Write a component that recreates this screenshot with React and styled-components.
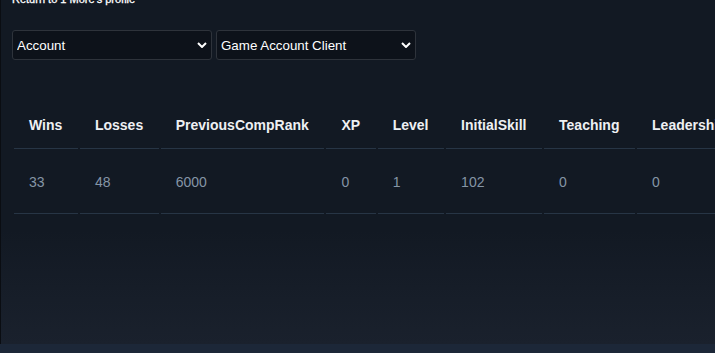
import React from 'react';
import styled, { createGlobalStyle } from 'styled-components';

const GlobalStyle = createGlobalStyle`
    html, body {
        margin: 0;
        padding: 0;
        background: #1c2738;
        overflow: hidden;
    }
    #root {
        width: 715px;
        height: 353px;
    }
`;

const Panel = styled.div`
    height: 344px;
    box-sizing: border-box;
    border-left: 1px solid #0a0d12;
    background: linear-gradient(to bottom, #121923 0px, #121923 230px, #1a212d 344px);
    font-family: "Liberation Sans", Arial, sans-serif;
    overflow: hidden;
    padding-left: 11px;
`;

const BackLink = styled.a`
    display: block;
    margin-top: -8px;
    height: 14px;
    color: #ffffff;
    font-size: 11px;
    line-height: 14px;
    text-decoration: none;
    -webkit-text-stroke: 0.3px #ffffff;
`;

const Filters = styled.div`
    display: flex;
    gap: 4px;
    margin-top: 24px;
`;

const SelectWrap = styled.div`
    position: relative;
    width: 200px;
    height: 30px;
`;

const Select = styled.select`
    appearance: none;
    width: 100%;
    height: 100%;
    box-sizing: border-box;
    background: #0d121a;
    border: 1px solid #2e333b;
    border-radius: 3px;
    color: #ffffff;
    font-family: "Liberation Sans", Arial, sans-serif;
    font-size: 13.33px;
    padding: 0 20px 0 4px;
    outline: none;
`;

const Chevron = styled.svg`
    position: absolute;
    right: 5px;
    top: 12px;
    pointer-events: none;
`;

const Table = styled.table`
    margin-top: 40px;
    border-collapse: separate;
    border-spacing: 2px;
    white-space: nowrap;
`;

const HeadCell = styled.th`
    padding: 15px 15.6px 15px 15px;
    text-align: left;
    color: #eef0f3;
    font-size: 14px;
    font-weight: bold;
    line-height: 16px;
    border-bottom: 1px solid #273545;
`;

const Cell = styled.td`
    padding: 23px 15.6px 23px 15px;
    color: #8595a6;
    font-size: 14px;
    line-height: 16px;
    border-bottom: 1px solid #273545;
`;

const columns = ['Wins', 'Losses', 'PreviousCompRank', 'XP', 'Level', 'InitialSkill', 'Teaching', 'Leadership', 'Friendly'];
const values = ['33', '48', '6000', '0', '1', '102', '0', '0', '0'];

function Dropdown({ value, options }) {
    return (
        <SelectWrap>
            <Select defaultValue={value}>
                {options.map((o) => <option key={o}>{o}</option>)}
            </Select>
            <Chevron width="10" height="6" viewBox="0 0 10 6">
                <path d="M1 1 L5 5 L9 1" fill="none" stroke="#ffffff" strokeWidth="2" />
            </Chevron>
        </SelectWrap>
    );
}

export default function App() {
    return (
        <Panel>
            <GlobalStyle />
            <BackLink href="#">Return to 1 More's profile</BackLink>
            <Filters>
                <Dropdown value="Account" options={['Account', 'Characters', 'Inventory']} />
                <Dropdown value="Game Account Client" options={['Game Account Client', 'Game Account Server']} />
            </Filters>
            <Table>
                <thead>
                    <tr>
                        {columns.map((c) => <HeadCell key={c}>{c}</HeadCell>)}
                    </tr>
                </thead>
                <tbody>
                    <tr>
                        {values.map((v, i) => <Cell key={i}>{v}</Cell>)}
                    </tr>
                </tbody>
            </Table>
        </Panel>
    );
}
